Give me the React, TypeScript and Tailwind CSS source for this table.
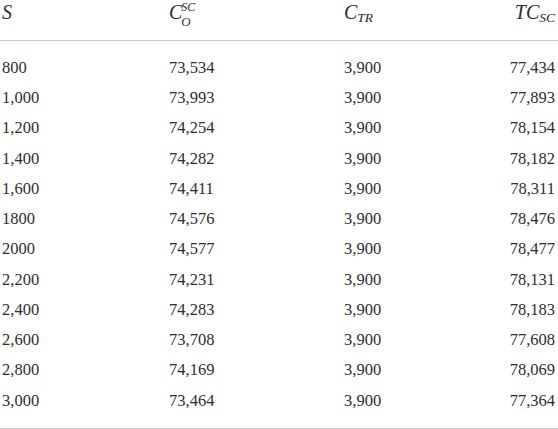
import React from "react";

const rows: [string, string, string, string][] = [
  ["800", "73,534", "3,900", "77,434"],
  ["1,000", "73,993", "3,900", "77,893"],
  ["1,200", "74,254", "3,900", "78,154"],
  ["1,400", "74,282", "3,900", "78,182"],
  ["1,600", "74,411", "3,900", "78,311"],
  ["1800", "74,576", "3,900", "78,476"],
  ["2000", "74,577", "3,900", "78,477"],
  ["2,200", "74,231", "3,900", "78,131"],
  ["2,400", "74,283", "3,900", "78,183"],
  ["2,600", "73,708", "3,900", "77,608"],
  ["2,800", "74,169", "3,900", "78,069"],
  ["3,000", "73,464", "3,900", "77,364"],
];

export default function App() {
  return (
    <div
      className="w-[558px] h-[429px] bg-white text-[#2e2e2e]"
      style={{ fontFamily: '"Liberation Serif", serif' }}
    >
      <div className="grid grid-cols-[167px_175px_1fr_1fr] pl-[2px] pr-[3px] h-[40px] pt-[2px] italic text-[20px] leading-[20px]">
        <div className="flex items-start">
          <span>S</span>
        </div>
        <div className="flex items-start">
          <span>C</span>
          <span className="flex flex-col text-[12px] -mt-[1px] -ml-[1px]">
            <span className="leading-[13.5px]">SC</span>
            <span className="leading-[13.5px] text-[13px]">O</span>
          </span>
        </div>
        <div className="flex items-start">
          <span>C</span>
          <span className="text-[13.5px] leading-[13.5px] mt-[9px]">TR</span>
        </div>
        <div className="flex items-start justify-end">
          <span>TC</span>
          <span className="text-[13.5px] leading-[13.5px] mt-[9px]">SC</span>
        </div>
      </div>
      <div className="h-px bg-[#c8c8c8]" />
      <div className="py-[12px]">
        {rows.map((r, i) => (
          <div
            key={i}
            className="grid grid-cols-[167px_175px_1fr_1fr] pl-[2px] pr-[3px] h-[30.25px] items-center text-[16.5px] leading-none"
          >
            <div>{r[0]}</div>
            <div>{r[1]}</div>
            <div>{r[2]}</div>
            <div className="text-right">{r[3]}</div>
          </div>
        ))}
      </div>
      <div className="h-px bg-[#c8c8c8]" />
    </div>
  );
}
